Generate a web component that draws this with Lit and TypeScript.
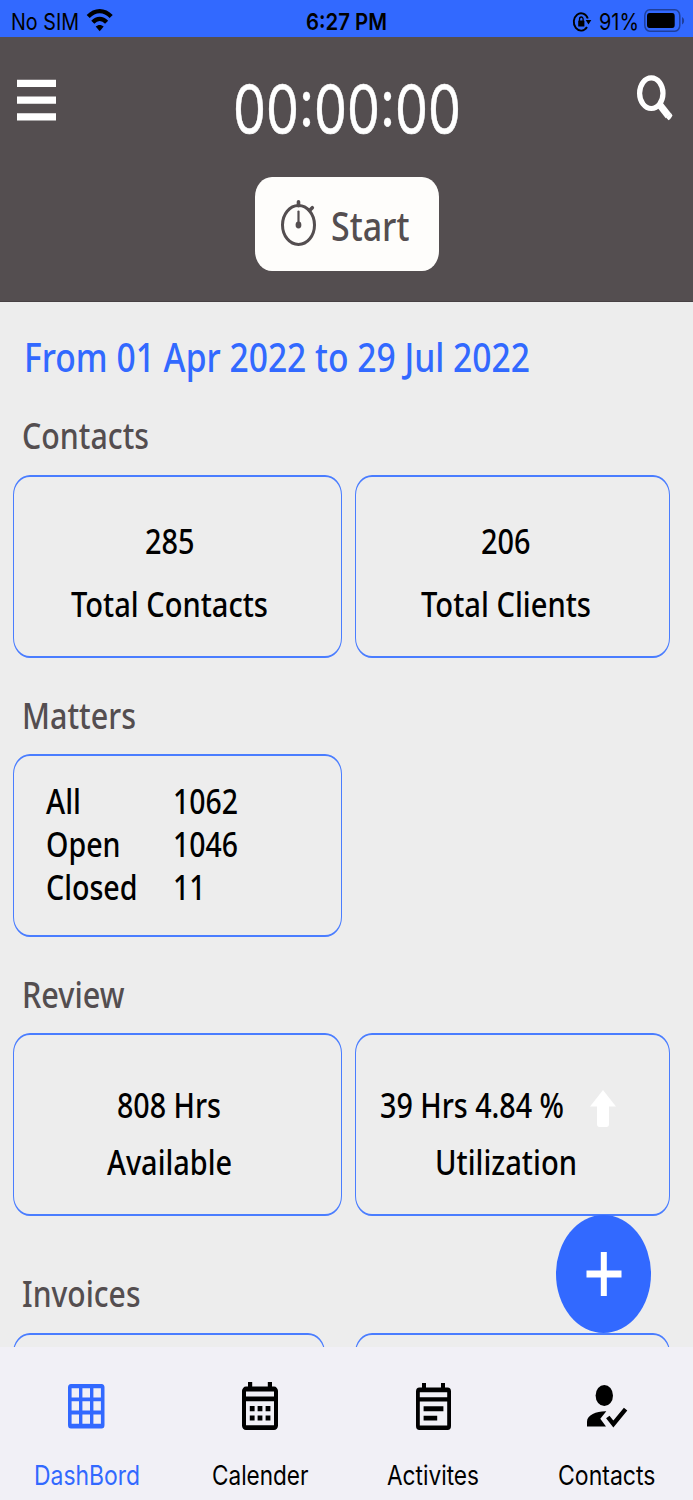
import { LitElement, html, svg, css, TemplateResult } from "lit";
import { customElement } from "lit/decorators.js";

/** One line of condensed text: drawn `width` px wide, on the baseline `base` inside a box `height` px high. */
const line = (cls: string, text: string, width: number, height: number, base: number) => html`
  <svg class="line ${cls}" width=${width} height=${height}>
    <text x="0" y=${base} textLength=${width} lengthAdjust="spacingAndGlyphs">${text}</text>
  </svg>
`;

const icons: Record<string, TemplateResult> = {
  grid: svg`
    <path fill-rule="evenodd" d="M3 0h30.500a3 3.500 0 0 1 3 3.500v37.500a3 3.500 0 0 1-3 3.500H3a3 3.500 0 0 1-3-3.500V3.500A3 3.500 0 0 1 3 0Z
      M3.600 4.300v9.200h7.400V4.300Zm10.800 0v9.200h7.600V4.300Zm11 0v9.200h7.500V4.300Z
      M3.600 17.300v9.200h7.400v-9.200Zm10.800 0v9.200h7.600v-9.200Zm11 0v9.200h7.500v-9.200Z
      M3.600 30.600v9.200h7.400v-9.200Zm10.800 0v9.200h7.600v-9.200Zm11 0v9.200h7.500v-9.200Z"/>`,
  calendar: svg`
    <path fill-rule="evenodd" d="M6 0h4.200v4.600h15.600V0H30v4.600h2a4 4.500 0 0 1 4 4.500v34.400a4 4.500 0 0 1-4 4.500H4a4 4.500 0 0 1-4-4.500V9.100a4 4.500 0 0 1 4-4.500h2Z
      M4 9.600v5h28v-5ZM4 19.200v24h28v-24Z"/>
    <path d="M7.800 24h4.800v5.200H7.800Zm7.800 0h4.800v5.200h-4.800Zm8 0h4.800v5.200h-4.800ZM7.800 33.400h4.800v5.200H7.800Zm7.800 0h4.800v5.200h-4.800Zm8 0h4.800v5.200h-4.800Z"/>`,
  notes: svg`
    <path fill-rule="evenodd" d="M6 0h4v4.600h15V0h4v4.600h2.500a3.500 4 0 0 1 3.500 4V43a3.500 4 0 0 1-3.500 4h-28A3.500 4 0 0 1 0 43V8.600a3.500 4 0 0 1 3.500-4H6Z
      M3.800 9.200v5h27.400v-5ZM3.800 18.600v24h27.400v-24Z"/>
    <path d="M7.600 23.200H27.400v5H7.600ZM7.600 32.800H21.200v4.800H7.600Z"/>`,
  contact: svg`
    <ellipse cx="17.300" cy="10.500" rx="8.700" ry="10.500"/>
    <path d="M0 41.500v-4.800C0 30 10 26 19.300 26.300L13.300 33.800L19 41.500Z"/>
    <path fill="none" stroke="currentColor" stroke-width="4.400" d="M20.800 32L26.400 39L38.600 24.200"/>`,
};

@customElement("stat-card")
export class StatCard extends LitElement {
  static styles = css`
    :host {
      display: block;
      box-sizing: border-box;
      border: solid #4a7dff;
      border-width: 2px 1.500px;
      border-radius: 17px / 20px;
      height: 183px;
    }
  `;
  render() {
    return html`<slot></slot>`;
  }
}

@customElement("app-root")
export class AppRoot extends LitElement {
  static styles = css`
    :host {
      display: flex;
      flex-direction: column;
      position: relative;
      width: 693px;
      height: 1500px;
      overflow: hidden;
      background: #ededed;
      font-family: "Noto Sans", "Open Sans", sans-serif;
      font-weight: 500;
      color: #000;
    }
    svg { display: block; flex: none; overflow: visible; fill: currentColor; }
    .status {
      display: grid;
      grid-template-columns: 1fr auto 1fr;
      height: 37px;
      flex: none;
      background: #3269ff;
      font-family: "Inter", sans-serif;
      font-weight: 400;
      font-size: 23.500px;
    }
    .side { display: flex; }
    .left { padding-left: 11px; gap: 8px; }
    .right { justify-content: flex-end; padding-right: 8.500px; }
    .percent { margin: 0 5px 0 8px; }
    .clock { font-weight: 600; }
    .top { height: 265px; flex: none; background: #544e50; color: #fff; box-shadow: inset 0 -1px #474143; }
    .bar { display: flex; justify-content: space-between; height: 140px; padding: 0 20px 0 17px; }
    .menu { margin-top: 42px; }
    .search { margin-top: 38px; }
    .timer { font: 400 66px "Inter", sans-serif; stroke: currentColor; stroke-width: .5px; }
    .start {
      display: flex;
      box-sizing: border-box;
      width: 184px;
      height: 94px;
      margin-left: 255px;
      padding-left: 25px;
      gap: 14px;
      border-radius: 17px / 20px;
      background: #fefdfb;
      color: #544e50;
    }
    .watch { margin-top: 22px; }
    .go { font-size: 40px; font-weight: 500; }
    .content { flex: 1; min-height: 0; overflow: hidden; }
    .title { font-size: 40.500px; color: #3269ff; margin-left: 23.500px; }
    .heading { font-size: 36px; color: #544e50; margin-left: 22px; }
    .row { display: grid; grid-template-columns: 329px 315px; column-gap: 13px; padding-left: 13.400px; }
    .invoices { grid-template-columns: 312px 315px; column-gap: 30px; }
    .text { font-size: 34.300px; }
    .stack { display: flex; flex-direction: column; align-items: center; padding-right: 17px; }
    .stack.narrow { padding-right: 13.500px; }
    .table { display: grid; grid-template-columns: 126.500px auto; justify-content: start; padding: 20px 0 0 31.800px; }
    .usage { display: flex; align-self: flex-start; padding-left: 24px; gap: 25.500px; height: 100px; }
    .arrow { color: #fff; margin-top: 55px; }
    .fab {
      position: absolute;
      left: 556px;
      top: 1215px;
      width: 95px;
      height: 118px;
      border-radius: 50%;
      background: #3269ff;
      color: #fff;
      display: grid;
      place-items: center;
    }
    .nav {
      display: grid;
      grid-template-columns: repeat(4, 1fr);
      height: 153px;
      flex: none;
      background: #f1f0f6;
      font: 400 27px "Inter", sans-serif;
    }
    .tab { display: flex; flex-direction: column; align-items: center; }
    .tab.on { color: #3269ff; }
    .glyph { display: flex; align-items: center; justify-content: center; height: 118px; }
  `;

  private tabs = [
    { name: "DashBord", width: 106, icon: "grid", w: 36.5, h: 44.5, on: true },
    { name: "Calender", width: 96.5, icon: "calendar", w: 36, h: 48, on: false },
    { name: "Activites", width: 92, icon: "notes", w: 35, h: 47, on: false },
    { name: "Contacts", width: 97.5, icon: "contact", w: 39, h: 42, on: false },
  ];

  private matters = [
    { name: "All", nameWidth: 35, count: "1062", countWidth: 65 },
    { name: "Open", nameWidth: 74.5, count: "1046", countWidth: 65 },
    { name: "Closed", nameWidth: 91.5, count: "11", countWidth: 32.5 },
  ];

  private renderStatus() {
    return html`
      <div class="status">
        <div class="side left">
          ${line("", "No SIM", 68, 37, 30)}
          <svg width="26" height="37" viewBox="0 0 26 37">
            <g fill="none" stroke="#000" stroke-width="4.200">
              <path d="M1.200 16.500C8 9.200 17.400 9.200 24.200 16.500"/>
              <path d="M5.800 22.200C10 17.700 15.400 17.700 19.600 22.200"/>
            </g>
            <path d="M12.700 31.200L8.700 26.500C11 24.400 14.400 24.400 16.700 26.500Z"/>
          </svg>
        </div>
        ${line("clock", "6:27 PM", 81, 37, 30)}
        <div class="side right">
          <svg width="18" height="37" viewBox="0 0 18 37">
            <path fill="none" stroke="#000" stroke-width="1.900" d="M14 27A7.300 8.700 0 1 1 14.800 18.500"/>
            <path d="M12.700 20h5.600l-2.800 4.600Z"/>
            <rect x="5.200" y="20.500" width="6.200" height="6" rx=".6"/>
            <path fill="none" stroke="#000" stroke-width="1.300" d="M6.500 21v-1.800a1.800 2.200 0 0 1 3.600 0v1.800"/>
          </svg>
          ${line("percent", "91%", 40, 37, 30)}
          <svg width="41" height="37" viewBox="0 0 41 37">
            <rect x=".8" y="9.800" width="35" height="21.400" rx="5" ry="6" fill="none" stroke="#1f3f9a" stroke-width="1.500"/>
            <rect x="3" y="13" width="27.700" height="15" rx="2.500" ry="3"/>
            <path fill="#1f3f9a" d="M38 17c2.800 1.300 2.800 6.200 0 7.500Z"/>
          </svg>
        </div>
      </div>
    `;
  }

  private renderTop() {
    return html`
      <div class="top">
        <div class="bar">
          <svg class="menu" width="39" height="42" viewBox="0 0 39 42">
            <path d="M0 .7h39v7.300H0ZM0 17.500h39v7.300H0ZM0 34.300h39v7.300H0Z"/>
          </svg>
          ${line("timer", "00:00:00", 228, 140, 96)}
          <svg class="search" width="36" height="45" viewBox="0 0 36 45">
            <ellipse cx="14.300" cy="18.200" rx="11.700" ry="15.300" fill="none" stroke="currentColor" stroke-width="5.200"/>
            <path fill="none" stroke="currentColor" stroke-width="7" stroke-linejoin="round" d="M22.500 29.500L31.500 41"/>
            <path d="M29 42.500L31.500 45.200Q33 45 35.500 40.500L34.300 38.500Z"/>
          </svg>
        </div>
        <div class="start">
          <svg class="watch" width="37" height="47" viewBox="0 0 37 47">
            <ellipse cx="18.500" cy="26" rx="16" ry="19.500" fill="none" stroke="currentColor" stroke-width="3"/>
            <path fill="none" stroke="currentColor" stroke-width="3.600" stroke-linecap="round" d="M18.500 2.800v4M29.500 11.500l2.800-2.800"/>
            <path fill="none" stroke="currentColor" stroke-width="2.200" stroke-linecap="round" d="M18.500 12.500v13"/>
            <ellipse cx="18.500" cy="26" rx="2.900" ry="3.400"/>
          </svg>
          ${line("go", "Start", 78.5, 94, 64)}
        </div>
      </div>
    `;
  }

  render() {
    return html`
      ${this.renderStatus()} ${this.renderTop()}
      <div class="content">
        ${line("title", "From 01 Apr 2022 to 29 Jul 2022", 506, 98, 69.7)}
        ${line("heading", "Contacts", 127, 75, 49)}
        <div class="row">
          <stat-card>
            <div class="stack">${line("text", "285", 49.5, 100, 77)} ${line("text", "Total Contacts", 197, 60, 39.7)}</div>
          </stat-card>
          <stat-card>
            <div class="stack narrow">${line("text", "206", 49.5, 100, 77)} ${line("text", "Total Clients", 170, 60, 39.7)}</div>
          </stat-card>
        </div>
        ${line("heading", "Matters", 114, 96, 71)}
        <div class="row">
          <stat-card>
            <div class="table">
              ${this.matters.map((m) => html`${line("text", m.name, m.nameWidth, 43, 38.2)} ${line("text", m.count, m.countWidth, 43, 38.2)}`)}
            </div>
          </stat-card>
        </div>
        ${line("heading", "Review", 102.5, 96, 71)}
        <div class="row">
          <stat-card>
            <div class="stack">${line("text", "808 Hrs", 104, 100, 82.9)} ${line("text", "Available", 125, 60, 40.3)}</div>
          </stat-card>
          <stat-card>
            <div class="stack narrow">
              <div class="usage">
                ${line("text", "39 Hrs 4.84 %", 184, 100, 82.9)}
                <svg class="arrow" width="26" height="37" viewBox="0 0 26 37">
                  <path d="M13 0L26 16.500H19V34a2.500 3 0 0 1-2.500 3H9.500A2.500 3 0 0 1 7 34V16.500H0Z"/>
                </svg>
              </div>
              ${line("text", "Utilization", 142, 60, 40.3)}
            </div>
          </stat-card>
        </div>
        ${line("heading", "Invoices", 118.5, 117, 91.3)}
        <div class="row invoices">
          <stat-card></stat-card>
          <stat-card></stat-card>
        </div>
      </div>
      <div class="fab">
        <svg width="35" height="44" viewBox="0 0 35 44">
          <path d="M14.800 0h6v18.500H35.500v7H20.800V44h-6V25.500H.5v-7H14.800Z"/>
        </svg>
      </div>
      <div class="nav">
        ${this.tabs.map(
          (t) => html`
            <div class="tab ${t.on ? "on" : ""}">
              <div class="glyph"><svg width=${t.w} height=${t.h} viewBox="0 0 ${t.w} ${t.h}">${icons[t.icon]}</svg></div>
              ${line("", t.name, t.width, 35, 20.3)}
            </div>
          `
        )}
      </div>
    `;
  }
}
